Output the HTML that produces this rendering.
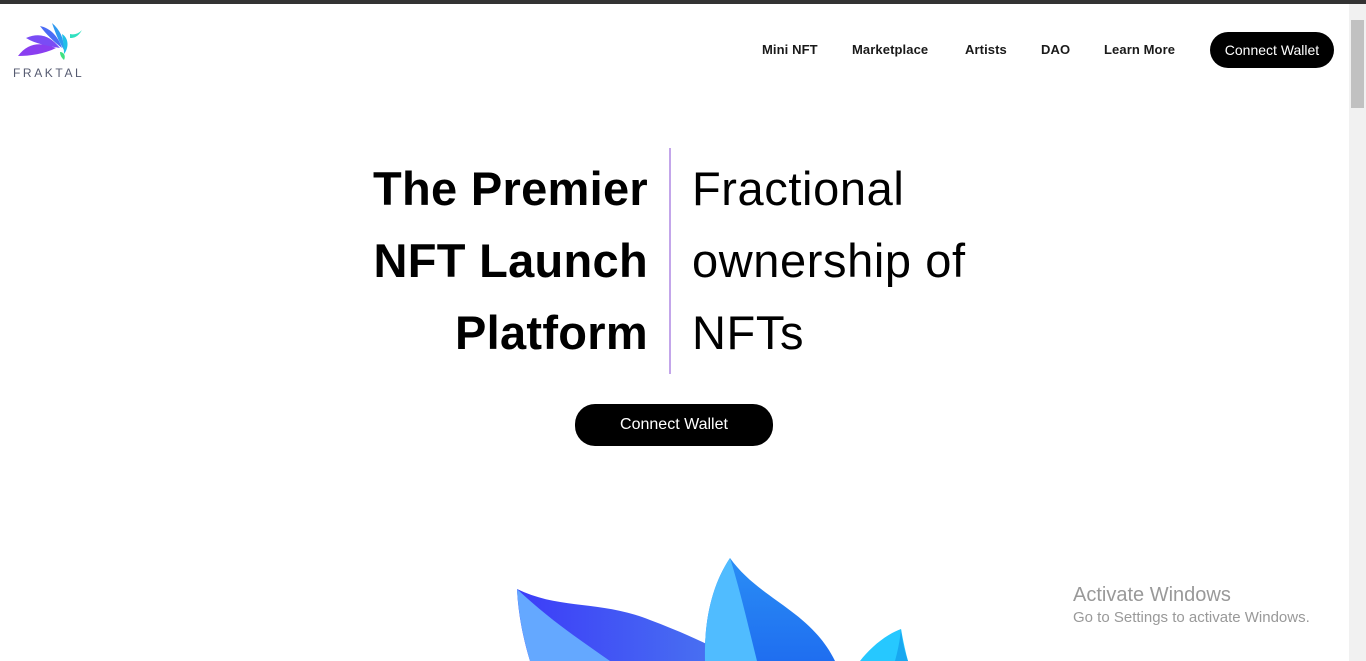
<!DOCTYPE html>
<html><head><meta charset="utf-8"><style>
*{margin:0;padding:0;box-sizing:border-box}
html,body{width:1366px;height:661px;overflow:hidden;background:#fff;font-family:"Liberation Sans",sans-serif;color:#000}
.top{position:absolute;left:0;top:0;width:1366px;height:4px;background:#333}
.sb{position:absolute;left:1349px;top:4px;width:17px;height:657px;background:#f1f1f1}
.sb i{position:absolute;left:2px;top:16px;width:13px;height:88px;background:#c1c1c1}
.nav a{position:absolute;top:42px;font-size:13px;font-weight:bold;color:#1a1a1a;text-decoration:none;letter-spacing:0.1px}
.btn{position:absolute;background:#000;color:#fff;border-radius:20px;text-align:center}
.l{position:absolute;right:718px;font-size:47px;font-weight:bold;letter-spacing:0.3px;white-space:nowrap}
.r{position:absolute;left:692px;font-size:47px;font-weight:normal;letter-spacing:0.6px;white-space:nowrap}
.div{position:absolute;left:669px;top:148px;width:2px;height:226px;background:#c3a6ea}
.logo{position:absolute;left:13px;top:66px;font-size:12px;letter-spacing:2.6px;color:#555a70}
.win{position:absolute;left:1073px;color:#999}
</style></head><body>
<div class="top"></div>
<svg style="position:absolute;left:14px;top:22px" width="72" height="40" viewBox="0 0 72 40">
<path d="M4 34 C14 20 28 20 42 26 C30 32 16 34 4 34Z" fill="#8a3ef0"/>
<path d="M12 16 C26 10 36 14 46 26 C34 24 22 22 12 16Z" fill="#7a4cf5"/>
<path d="M26 4 C36 6 44 14 48 26 C40 20 32 12 26 4Z" fill="#4b6cf5"/>
<path d="M38 1 C46 8 50 16 50 28 C45 20 41 10 38 1Z" fill="#2f9af0"/>
<path d="M48 12 C55 16 55 26 50 32 C50 26 49 18 48 12Z" fill="#20c0e8"/>
<path d="M56 12 C60 13 64 12 68 8 C64 15 60 16 56 16Z" fill="#30e0c0"/>
<path d="M46 30 C50 30 52 34 50 38 C48 36 46 34 46 30Z" fill="#40e080"/>
</svg>
<div class="logo">FRAKTAL</div>
<div class="nav">
<a style="left:762px">Mini NFT</a><a style="left:852px">Marketplace</a><a style="left:965px">Artists</a><a style="left:1041px">DAO</a><a style="left:1104px">Learn More</a>
</div>
<div class="btn" style="left:1210px;top:32px;width:124px;height:36px;line-height:36px;font-size:14px">Connect Wallet</div>
<div class="l" style="top:161px">The Premier</div>
<div class="l" style="top:233px">NFT Launch</div>
<div class="l" style="top:305px">Platform</div>
<div class="div"></div>
<div class="r" style="top:161px">Fractional</div>
<div class="r" style="top:233px">ownership of</div>
<div class="r" style="top:305px">NFTs</div>
<div class="btn" style="left:575px;top:404px;width:198px;height:42px;line-height:42px;font-size:16px">Connect Wallet</div>
<svg style="position:absolute;left:0;top:540px" width="1366" height="121">
<defs>
<linearGradient id="a" x1="0" y1="0" x2="1" y2="0"><stop offset="0" stop-color="#3c3cf8"/><stop offset="1" stop-color="#4a78f0"/></linearGradient>
<linearGradient id="b" x1="0" y1="0" x2="0" y2="1"><stop offset="0" stop-color="#2a8ef5"/><stop offset="1" stop-color="#1f6ef0"/></linearGradient>
</defs>
<path d="M517 49 C560 70 600 60 650 80 C690 95 720 110 740 121 L530 121 C522 95 518 70 517 49Z" fill="url(#a)"/>
<path d="M517 49 C519 80 524 100 530 121 L610 121 C580 100 550 80 517 49Z" fill="#64a8ff"/>
<path d="M730 18 C760 60 810 70 835 121 L705 121 C704 80 712 45 730 18Z" fill="url(#b)"/>
<path d="M730 18 C712 45 704 80 705 121 L757 121 C748 85 740 50 730 18Z" fill="#50bcff"/>
<path d="M901 89 C885 95 870 108 860 121 L908 121 C905 110 903 100 901 89Z" fill="#26c8ff"/>
<path d="M901 89 C902 100 904 110 908 121 L895 121 C898 110 900 100 901 89Z" fill="#18a8f0"/>
</svg>
<div class="win" style="top:584px;font-size:20px">Activate Windows</div>
<div class="win" style="top:609px;font-size:15px">Go to Settings to activate Windows.</div>
<div class="sb"><i></i></div>
</body></html>
